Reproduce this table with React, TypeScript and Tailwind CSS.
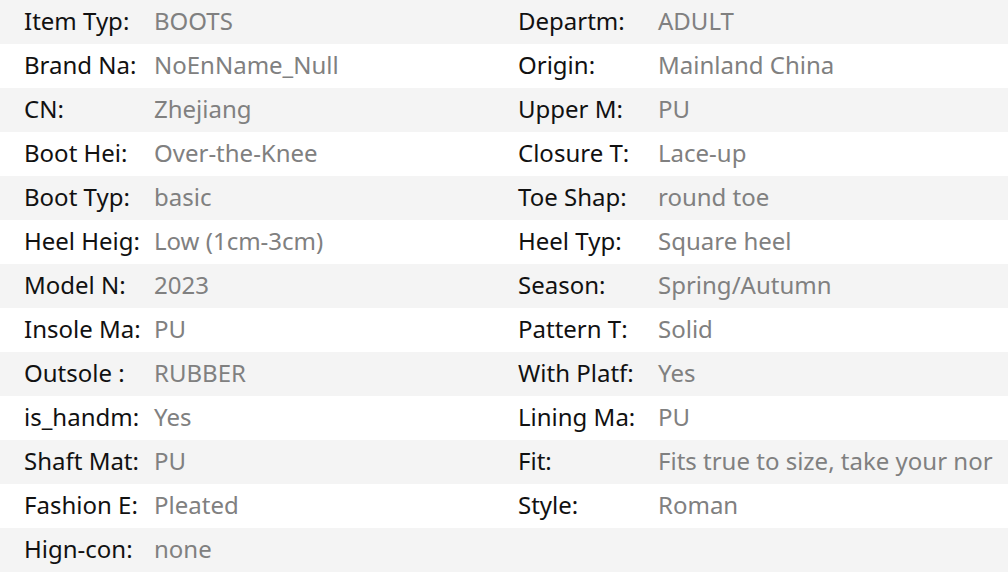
const rows: [string, string, string, string][] = [
  ["Item Typ:", "BOOTS", "Departm:", "ADULT"],
  ["Brand Na:", "NoEnName_Null", "Origin:", "Mainland China"],
  ["CN:", "Zhejiang", "Upper M:", "PU"],
  ["Boot Hei:", "Over-the-Knee", "Closure T:", "Lace-up"],
  ["Boot Typ:", "basic", "Toe Shap:", "round toe"],
  ["Heel Heig:", "Low (1cm-3cm)", "Heel Typ:", "Square heel"],
  ["Model N:", "2023", "Season:", "Spring/Autumn"],
  ["Insole Ma:", "PU", "Pattern T:", "Solid"],
  ["Outsole :", "RUBBER", "With Platf:", "Yes"],
  ["is_handm:", "Yes", "Lining Ma:", "PU"],
  ["Shaft Mat:", "PU", "Fit:", "Fits true to size, take your nor"],
  ["Fashion E:", "Pleated", "Style:", "Roman"],
  ["Hign-con:", "none", "", ""],
];

export default function App() {
  return (
    <div
      className="w-[1008px] h-[572px] overflow-hidden bg-white"
      style={{ fontFamily: '"Noto Sans", "Open Sans", sans-serif' }}
    >
      {rows.map((r, i) => (
        <div
          key={i}
          className={`flex h-[44px] items-start pt-[3px] text-[24px] leading-normal whitespace-nowrap ${
            i % 2 === 0 ? "bg-[#f4f4f4]" : "bg-white"
          }`}
        >
          <div className="w-[130px] ml-[24px] shrink-0 text-[#111]">{r[0]}</div>
          <div className="w-[364px] shrink-0 text-[#808080]">{r[1]}</div>
          <div className="w-[140px] shrink-0 text-[#111]">{r[2]}</div>
          <div className="text-[#808080]">{r[3]}</div>
        </div>
      ))}
    </div>
  );
}
